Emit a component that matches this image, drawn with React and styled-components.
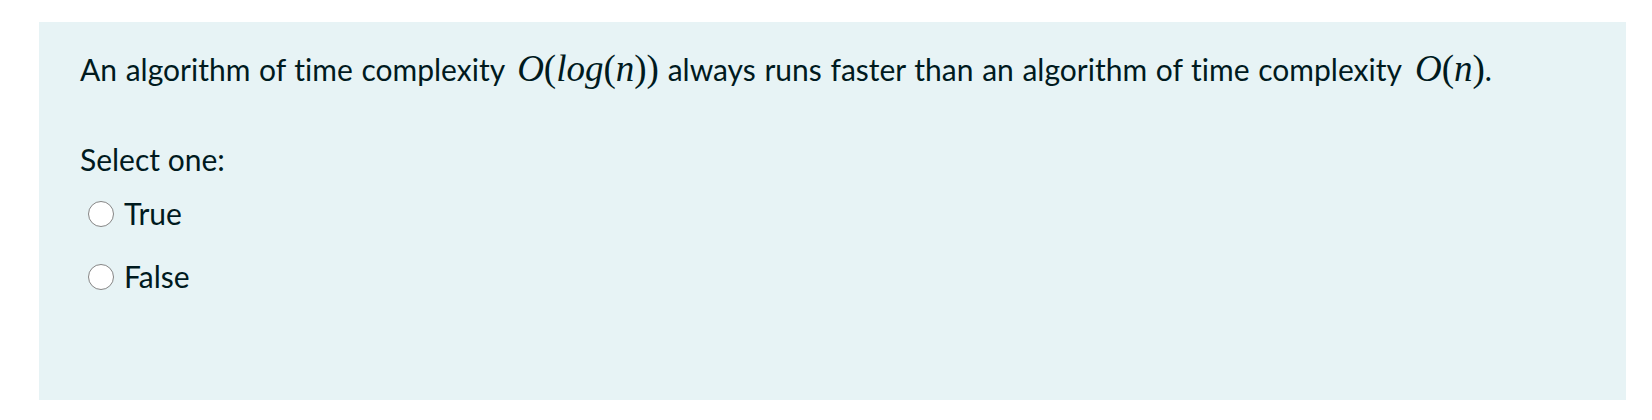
import React from 'react';
import styled, { createGlobalStyle } from 'styled-components';

const Global = createGlobalStyle`
  html, body { margin: 0; padding: 0; background: #ffffff; }
  body {
    font-family: Lato, "Open Sans", sans-serif;
    color: #001a1e;
    font-variant-ligatures: none;
  }
`;

const Page = styled.div`
  padding: 22px 26px 20px 39px;
`;

const Formulation = styled.div`
  background: #e7f3f5;
  height: 378px;
  box-sizing: border-box;
  padding: 24px 41px 0;
  font-size: 30px;
  line-height: 45px;
`;

const QText = styled.p`
  margin: 0;
  white-space: nowrap;
  word-spacing: 1px;
`;

const MathSpan = styled.span`
  font-family: "Liberation Serif", "Times New Roman", serif;
  font-size: 37px;
  line-height: 45px;
  word-spacing: 0;
  margin-left: ${(p) => p.$lead || 0}px;
`;

const Mi = styled.i`
  font-style: italic;
`;

const Mo = styled.span`
  font-style: normal;
`;

const Prompt = styled.div`
  margin-top: 45px;
`;

const Options = styled.div`
  margin-top: 9px;
  display: flex;
  flex-direction: column;
  gap: 18px;
`;

const Option = styled.label`
  display: flex;
  align-items: center;
  padding-left: 8px;
  line-height: 45px;
`;

const Radio = styled.input.attrs({ type: 'radio' })`
  appearance: none;
  -webkit-appearance: none;
  margin: 0 10px 0 0;
  width: 26px;
  height: 26px;
  box-sizing: border-box;
  border-radius: 50%;
  border: 1.5px solid #858585;
  background: #ffffff;
`;

export default function App() {
  return (
    <>
      <Global />
      <Page>
        <Formulation>
          <QText>
            An algorithm of time complexity
            <MathSpan $lead={12}>
              <Mi>O</Mi><Mo>(</Mo><Mi>log</Mi><Mo>(</Mo><Mi>n</Mi><Mo>))</Mo>
            </MathSpan>{' '}
            always runs faster than an algorithm of time complexity
            <MathSpan $lead={13}>
              <Mi>O</Mi><Mo>(</Mo><Mi>n</Mi><Mo>)</Mo>
            </MathSpan>.
          </QText>
          <Prompt>Select one:</Prompt>
          <Options>
            <Option>
              <Radio name="answer" />
              True
            </Option>
            <Option>
              <Radio name="answer" />
              False
            </Option>
          </Options>
        </Formulation>
      </Page>
    </>
  );
}
